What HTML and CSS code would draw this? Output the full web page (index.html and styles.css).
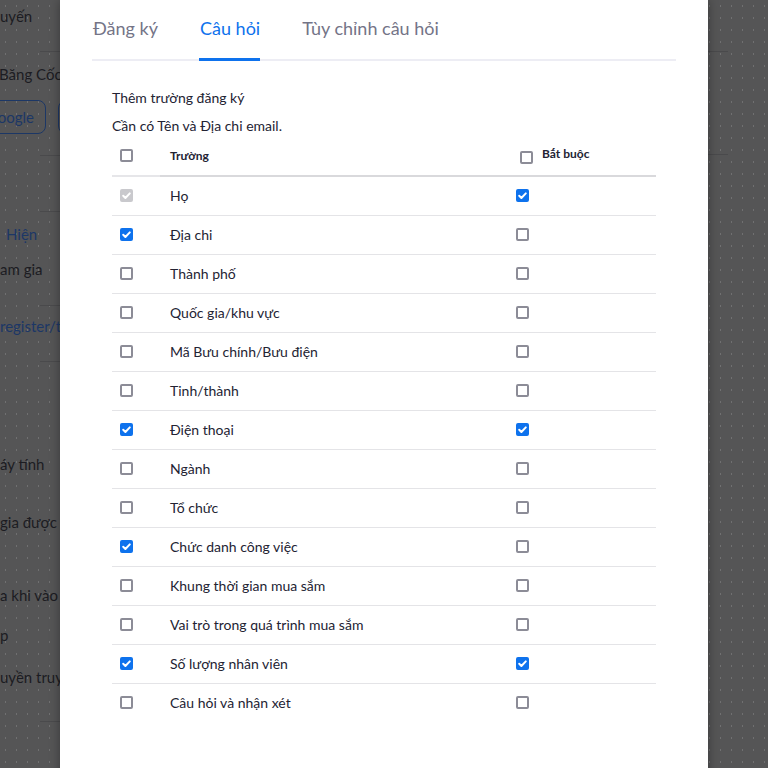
FILE: index.html
```html
<!DOCTYPE html>
<html lang="vi">
<head>
<meta charset="utf-8">
<title>Câu hỏi</title>
<link rel="stylesheet" href="styles.css">
</head>
<body>
<div class="page">
  <div class="bg-text t1">uyến</div>
  <div class="bg-rule r1"></div>
  <div class="bg-text t2">Băng Cốc</div>
  <div class="bg-buttons">
    <span class="bg-btn">oogle</span>
    <span class="bg-btn second"></span>
  </div>
  <div class="bg-rule r2"></div>
  <div class="bg-rule r3"></div>
  <div class="bg-text link t3">Hiện</div>
  <div class="bg-text t4">am gia</div>
  <div class="bg-rule r4"></div>
  <div class="bg-text link t5">register/tJ</div>
  <div class="bg-rule r5"></div>
  <div class="bg-text t6">áy tính</div>
  <div class="bg-text t7">gia được v</div>
  <div class="bg-text t8">a khi vào</div>
  <div class="bg-text t9">p</div>
  <div class="bg-text t10">uyền truy</div>
  <div class="bg-rule r6"></div>
</div>
<div class="right-rules">
  <div class="bg-rule rr1"></div>
  <div class="bg-rule rr2"></div>
</div>

<div class="modal">
  <div class="tabs">
    <div class="tab">Đăng ký</div>
    <div class="tab active">Câu hỏi</div>
    <div class="tab">Tùy chỉnh câu hỏi</div>
  </div>
  <div class="content">
    <p class="line first">Thêm trường đăng ký</p>
    <p class="line">Cần có Tên và Địa chi email.</p>
    <div class="grid">
      <div class="row head">
        <div class="cell c1"><span class="cb"></span></div>
        <div class="cell c2"><span class="hlabel">Trường</span></div>
        <div class="cell c3"><span class="cb"></span><span class="hlabel req">Bắt buộc</span></div>
      </div>
      <div class="row">
        <div class="cell c1"><span class="cb disabled"><svg viewBox="0 0 13 13"><path d="M3.2 6.8l2.2 2.2 4.4-4.6"/></svg></span></div>
        <div class="cell c2">Họ</div>
        <div class="cell c3"><span class="cb on"><svg viewBox="0 0 13 13"><path d="M3.2 6.8l2.2 2.2 4.4-4.6"/></svg></span></div>
      </div>
      <div class="row">
        <div class="cell c1"><span class="cb on"><svg viewBox="0 0 13 13"><path d="M3.2 6.8l2.2 2.2 4.4-4.6"/></svg></span></div>
        <div class="cell c2">Địa chi</div>
        <div class="cell c3"><span class="cb"></span></div>
      </div>
      <div class="row">
        <div class="cell c1"><span class="cb"></span></div>
        <div class="cell c2">Thành phố</div>
        <div class="cell c3"><span class="cb"></span></div>
      </div>
      <div class="row">
        <div class="cell c1"><span class="cb"></span></div>
        <div class="cell c2">Quốc gia/khu vực</div>
        <div class="cell c3"><span class="cb"></span></div>
      </div>
      <div class="row">
        <div class="cell c1"><span class="cb"></span></div>
        <div class="cell c2">Mã Bưu chính/Bưu điện</div>
        <div class="cell c3"><span class="cb"></span></div>
      </div>
      <div class="row">
        <div class="cell c1"><span class="cb"></span></div>
        <div class="cell c2">Tinh/thành</div>
        <div class="cell c3"><span class="cb"></span></div>
      </div>
      <div class="row">
        <div class="cell c1"><span class="cb on"><svg viewBox="0 0 13 13"><path d="M3.2 6.8l2.2 2.2 4.4-4.6"/></svg></span></div>
        <div class="cell c2">Điện thoại</div>
        <div class="cell c3"><span class="cb on"><svg viewBox="0 0 13 13"><path d="M3.2 6.8l2.2 2.2 4.4-4.6"/></svg></span></div>
      </div>
      <div class="row">
        <div class="cell c1"><span class="cb"></span></div>
        <div class="cell c2">Ngành</div>
        <div class="cell c3"><span class="cb"></span></div>
      </div>
      <div class="row">
        <div class="cell c1"><span class="cb"></span></div>
        <div class="cell c2">Tổ chức</div>
        <div class="cell c3"><span class="cb"></span></div>
      </div>
      <div class="row">
        <div class="cell c1"><span class="cb on"><svg viewBox="0 0 13 13"><path d="M3.2 6.8l2.2 2.2 4.4-4.6"/></svg></span></div>
        <div class="cell c2">Chức danh công việc</div>
        <div class="cell c3"><span class="cb"></span></div>
      </div>
      <div class="row">
        <div class="cell c1"><span class="cb"></span></div>
        <div class="cell c2">Khung thời gian mua sắm</div>
        <div class="cell c3"><span class="cb"></span></div>
      </div>
      <div class="row">
        <div class="cell c1"><span class="cb"></span></div>
        <div class="cell c2">Vai trò trong quá trình mua sắm</div>
        <div class="cell c3"><span class="cb"></span></div>
      </div>
      <div class="row">
        <div class="cell c1"><span class="cb on"><svg viewBox="0 0 13 13"><path d="M3.2 6.8l2.2 2.2 4.4-4.6"/></svg></span></div>
        <div class="cell c2">Số lượng nhân viên</div>
        <div class="cell c3"><span class="cb on"><svg viewBox="0 0 13 13"><path d="M3.2 6.8l2.2 2.2 4.4-4.6"/></svg></span></div>
      </div>
      <div class="row last">
        <div class="cell c1"><span class="cb"></span></div>
        <div class="cell c2">Câu hỏi và nhận xét</div>
        <div class="cell c3"><span class="cb"></span></div>
      </div>
    </div>
  </div>
</div>
</body>
</html>
```

FILE: styles.css
```css
html, body {
  margin: 0;
  padding: 0;
  height: 100%;
  overflow: hidden;
}
body {
  background-color: #555556;
  background-image: radial-gradient(circle, rgba(255,255,255,0.16) 0.6px, transparent 1.1px);
  background-size: 11px 12px;
  font-family: Lato, "Noto Sans", sans-serif;
  color: #232333;
}

/* dimmed page behind the overlay */
.page {
  width: 120px;
  display: flex;
  flex-direction: column;
  font-size: 15px;
  line-height: 20px;
}
.bg-text {
  color: #1c1c22;
  white-space: nowrap;
}
.bg-text.link { color: #1c3766; }
.bg-rule {
  height: 1px;
  background: #4a4a4c;
  margin-left: 40px;
}
.t1 { margin-top: 6px; }
.r1 { margin-top: 25px; }
.t2 { margin-top: 12px; margin-left: -1px; }
.bg-buttons {
  margin-top: 16px;
  display: flex;
  gap: 12px;
  margin-left: -20px;
}
.bg-btn {
  height: 34px;
  box-sizing: border-box;
  border: 1px solid #1c3766;
  border-radius: 8px;
  width: 66px;
  color: #1c3766;
  line-height: 32px;
  text-align: right;
  padding-right: 11px;
}
.bg-btn.second { width: 40px; }
.r2 { margin-top: 21px; }
.r3 { margin-top: 55px; }
.t3 { margin-top: 12px; margin-left: 6px; }
.t4 { margin-top: 15px; }
.r4 { margin-top: 26px; }
.t5 { margin-top: 10px; }
.r5 { margin-top: 25px; }
.t6 { margin-top: 92px; }
.t7 { margin-top: 38px; }
.t8 { margin-top: 53px; }
.t9 { margin-top: 20px; }
.t10 { margin-top: 22px; }
.r6 { margin-top: 34px; }

.right-rules {
  position: absolute;
  left: 708px;
  top: 0;
  width: 60px;
}
.right-rules .bg-rule {
  margin-left: 0;
  width: 20px;
}
.rr1 { margin-top: 51px; }
.rr2 { margin-top: 102px; }

/* modal */
.modal {
  position: absolute;
  left: 60px;
  top: 0;
  width: 648px;
  height: 800px;
  box-sizing: border-box;
  background: #ffffff;
  padding: 0 32px;
  box-shadow: 0 0 10px rgba(0,0,0,0.35);
}
.tabs {
  display: flex;
  border-bottom: 2px solid #ededf4;
  padding-left: 1px;
}
.tab {
  font-size: 18px;
  line-height: 24px;
  padding: 16px 0 19px;
  margin-right: 42px;
  color: #747487;
  position: relative;
}
.tab.active {
  color: #0e72ed;
}
.tab.active::after {
  content: "";
  position: absolute;
  left: -1px;
  right: 0;
  bottom: -2px;
  height: 3px;
  background: #0e72ed;
}

.content {
  padding: 27px 20px 0;
}
.line {
  margin: 0;
  font-size: 14px;
  line-height: 20px;
  color: #232333;
}
.line.first { margin-bottom: 8px; }

.grid {
  display: flex;
  flex-direction: column;
}
.row {
  display: grid;
  grid-template-columns: 48px 348px 148px;
  height: 39px;
  font-size: 14px;
}
.cell {
  display: flex;
  align-items: center;
  box-sizing: border-box;
  padding-bottom: 2px;
  border-bottom: 1px solid #e4e4e7;
}
.row.last .cell { border-bottom-color: transparent; }
.row.head .cell { border-bottom: 2px solid #d9d9dc; padding-bottom: 0; }
.row.head .c1 { border-bottom-color: #e6e6e9; }
.row.head { height: 41px; }
.c1 { padding-left: 8px; }
.c2 { padding-left: 10px; }
.c3 { padding-left: 8px; }
.row.head .c3 { padding-left: 12px; }
.hlabel {
  font-size: 12px;
  font-weight: 700;
  color: #232333;
}
.hlabel.req {
  margin-left: 9px;
  margin-top: -4px;
  align-self: center;
}
.row.head .c3 .cb { margin-top: 4px; }

.cb {
  width: 13px;
  height: 13px;
  box-sizing: border-box;
  border: 2px solid #8c8c97;
  border-radius: 2px;
  display: inline-block;
  flex: none;
  position: relative;
}
.cb svg {
  position: absolute;
  left: -2px;
  top: -2px;
  width: 13px;
  height: 13px;
  fill: none;
  stroke: #ffffff;
  stroke-width: 2;
  stroke-linecap: round;
  stroke-linejoin: round;
}
.cb.on {
  background: #0e72ed;
  border-color: #0e72ed;
}
.cb.disabled {
  background: #c9c9cd;
  border-color: #c9c9cd;
}
```
